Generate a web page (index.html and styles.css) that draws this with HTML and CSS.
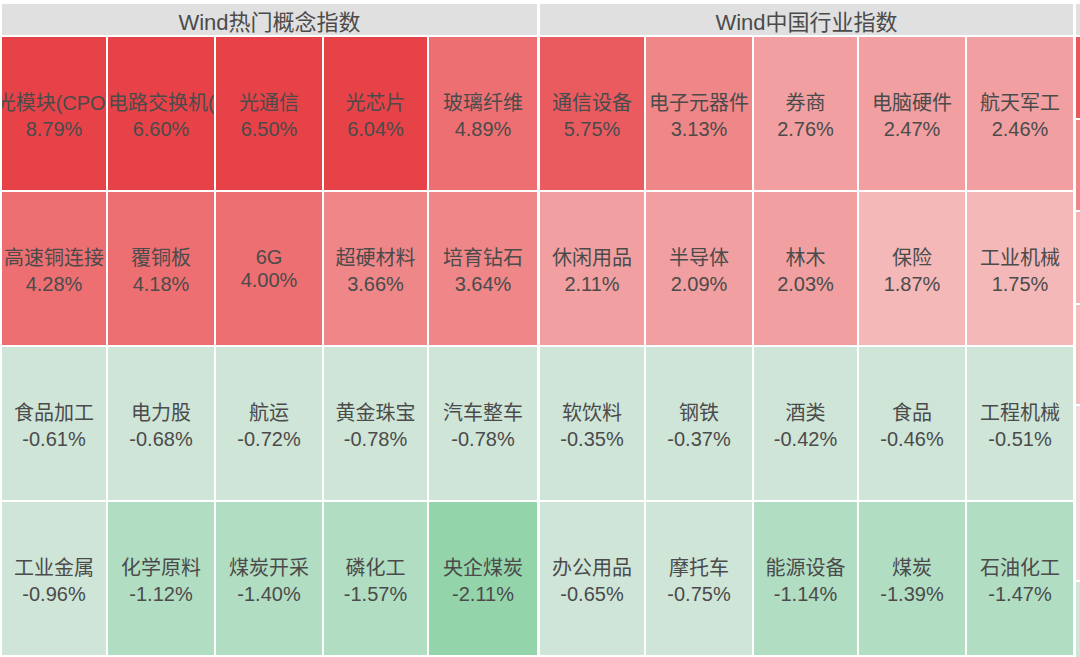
FILE: index.html
```html
<!DOCTYPE html>
<html lang="zh-CN">
<head>
<meta charset="utf-8">
<title>Wind指数</title>
<link rel="stylesheet" href="styles.css">
</head>
<body>
<div class="board">
  <section class="panel panel-a">
    <div class="head">Wind热门概念指数</div>
    <div class="cell r1"><span class="name">光模块(CPO)</span><span class="pct">8.79%</span></div>
    <div class="cell r1"><span class="name name-start">电路交换机(OCS)</span><span class="pct">6.60%</span></div>
    <div class="cell r1"><span class="name">光通信</span><span class="pct">6.50%</span></div>
    <div class="cell r1"><span class="name">光芯片</span><span class="pct">6.04%</span></div>
    <div class="cell r3"><span class="name">玻璃纤维</span><span class="pct">4.89%</span></div>

    <div class="cell r3"><span class="name">高速铜连接</span><span class="pct">4.28%</span></div>
    <div class="cell r3"><span class="name">覆铜板</span><span class="pct">4.18%</span></div>
    <div class="cell r3"><span class="name latin">6G</span><span class="pct">4.00%</span></div>
    <div class="cell r4"><span class="name">超硬材料</span><span class="pct">3.66%</span></div>
    <div class="cell r4"><span class="name">培育钻石</span><span class="pct">3.64%</span></div>

    <div class="cell g1"><span class="name">食品加工</span><span class="pct">-0.61%</span></div>
    <div class="cell g1"><span class="name">电力股</span><span class="pct">-0.68%</span></div>
    <div class="cell g1"><span class="name">航运</span><span class="pct">-0.72%</span></div>
    <div class="cell g1"><span class="name">黄金珠宝</span><span class="pct">-0.78%</span></div>
    <div class="cell g1"><span class="name">汽车整车</span><span class="pct">-0.78%</span></div>

    <div class="cell g1"><span class="name">工业金属</span><span class="pct">-0.96%</span></div>
    <div class="cell g2"><span class="name">化学原料</span><span class="pct">-1.12%</span></div>
    <div class="cell g2"><span class="name">煤炭开采</span><span class="pct">-1.40%</span></div>
    <div class="cell g2"><span class="name">磷化工</span><span class="pct">-1.57%</span></div>
    <div class="cell g3"><span class="name">央企煤炭</span><span class="pct">-2.11%</span></div>
  </section>

  <section class="panel panel-b">
    <div class="head">Wind中国行业指数</div>
    <div class="cell r2"><span class="name">通信设备</span><span class="pct">5.75%</span></div>
    <div class="cell r4"><span class="name">电子元器件</span><span class="pct">3.13%</span></div>
    <div class="cell r5"><span class="name">券商</span><span class="pct">2.76%</span></div>
    <div class="cell r5"><span class="name">电脑硬件</span><span class="pct">2.47%</span></div>
    <div class="cell r5"><span class="name">航天军工</span><span class="pct">2.46%</span></div>

    <div class="cell r5"><span class="name">休闲用品</span><span class="pct">2.11%</span></div>
    <div class="cell r5"><span class="name">半导体</span><span class="pct">2.09%</span></div>
    <div class="cell r5"><span class="name">林木</span><span class="pct">2.03%</span></div>
    <div class="cell r6"><span class="name">保险</span><span class="pct">1.87%</span></div>
    <div class="cell r6"><span class="name">工业机械</span><span class="pct">1.75%</span></div>

    <div class="cell g1"><span class="name">软饮料</span><span class="pct">-0.35%</span></div>
    <div class="cell g1"><span class="name">钢铁</span><span class="pct">-0.37%</span></div>
    <div class="cell g1"><span class="name">酒类</span><span class="pct">-0.42%</span></div>
    <div class="cell g1"><span class="name">食品</span><span class="pct">-0.46%</span></div>
    <div class="cell g1"><span class="name">工程机械</span><span class="pct">-0.51%</span></div>

    <div class="cell g1"><span class="name">办公用品</span><span class="pct">-0.65%</span></div>
    <div class="cell g1"><span class="name">摩托车</span><span class="pct">-0.75%</span></div>
    <div class="cell g2"><span class="name">能源设备</span><span class="pct">-1.14%</span></div>
    <div class="cell g2"><span class="name">煤炭</span><span class="pct">-1.39%</span></div>
    <div class="cell g2"><span class="name">石油化工</span><span class="pct">-1.47%</span></div>
  </section>

  <section class="panel panel-c">
    <div class="head"></div>
    <div class="strip s1"></div>
    <div class="strip s2"></div>
    <div class="strip s3"></div>
    <div class="strip s4"></div>
    <div class="strip s5"></div>
    <div class="strip s6"></div>
  </section>
</div>
</body>
</html>
```

FILE: styles.css
```css
html, body {
  margin: 0;
  padding: 0;
  background: #ffffff;
}

body {
  width: 1080px;
  height: 657px;
  overflow: hidden;
  font-family: "Liberation Sans", "Noto Sans CJK SC", sans-serif;
  color: #4b4b4b;
}

.board {
  display: flex;
  gap: 3px;
  padding: 4px 0 0 2px;
  overflow: hidden;
  height: 653px;
}

.panel {
  display: grid;
  grid-template-rows: 31px 153px 153px 153px 153px;
  gap: 2px;
  flex: none;
}

.panel-a {
  grid-template-columns: 104px 106px 106px 103px 108px;
}

.panel-b {
  grid-template-columns: 104px 106px 103px 106px 106px;
}

.panel-c {
  flex: 1 0 4px;
  grid-template-columns: 1fr;
  grid-template-rows: 31px 81px 90px 91px 99px 174px 80px;
}

.head {
  grid-column: 1 / -1;
  background: #e0e0e0;
  display: flex;
  align-items: center;
  justify-content: center;
  font-size: 22px;
  color: #4b4b4b;
  white-space: nowrap;
  overflow: hidden;
}

.cell {
  display: flex;
  flex-direction: column;
  align-items: center;
  justify-content: center;
  overflow: hidden;
  font-size: 20px;
}

.name,
.pct {
  white-space: nowrap;
}

.name {
  margin-bottom: 2px;
}

.name.latin {
  margin-bottom: 0;
}

.name-start {
  align-self: flex-start;
}

.r1 { background: #e64247; }
.r2 { background: #ea5b60; }
.r3 { background: #ee6f72; }
.r4 { background: #ef8688; }
.r5 { background: #f19fa0; }
.r6 { background: #f4b8b8; }

.g1 { background: #cfe5d8; }
.g2 { background: #b1ddc3; }
.g3 { background: #93d4ab; }

.s1 { background: #e9565b; }
.s2 { background: #ef8789; }
.s3 { background: #f3b3b4; }
.s4 { background: #f4bcbd; }
.s5 { background: #f5d5db; }
.s6 { background: #cfe5d8; }
```
